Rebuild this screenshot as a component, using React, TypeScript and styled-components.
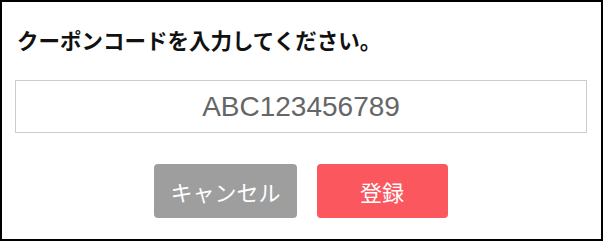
import styled, { createGlobalStyle } from 'styled-components'

const GlobalStyle = createGlobalStyle`
	* {
		box-sizing: border-box;
	}
	body {
		margin: 0;
		background: #fff;
		font-family: 'Noto Sans CJK JP', 'Noto Sans', sans-serif;
	}
`

const Frame = styled.div`
	width: 603px;
	height: 241px;
	border: 2px solid #000;
	padding: 23px 14px 0 13px;
	display: flex;
	flex-direction: column;
`

const Title = styled.h2`
	margin: 0 0 0 2px;
	font-size: 21.5px;
	line-height: 30px;
	font-weight: 700;
	color: #111;
`

const CodeInput = styled.input`
	margin-top: 25px;
	width: 100%;
	height: 53px;
	border: 1px solid #ccc;
	border-radius: 0;
	background: #fff;
	text-align: center;
	font-family: 'Liberation Sans', Arial, sans-serif;
	font-size: 28px;
	color: #666;
	outline: none;
`

const Actions = styled.div`
	margin-top: 31px;
	display: flex;
	justify-content: center;
	gap: 20px;
`

const Button = styled.button<{ $variant: 'cancel' | 'submit' }>`
	min-width: 131px;
	height: 54px;
	padding: 0 16px;
	border: none;
	border-radius: 4px;
	background: ${({ $variant }) => ($variant === 'cancel' ? '#9e9e9e' : '#fa575f')};
	color: #fff;
	font-family: 'Noto Sans CJK JP', sans-serif;
	font-size: 22px;
	cursor: pointer;
`

export default function App(): JSX.Element {
	return (
		<>
			<GlobalStyle />
			<Frame>
				<Title>クーポンコードを入力してください。</Title>
				<CodeInput type="text" defaultValue="ABC123456789" />
				<Actions>
					<Button $variant="cancel">キャンセル</Button>
					<Button $variant="submit">登録</Button>
				</Actions>
			</Frame>
		</>
	)
}
